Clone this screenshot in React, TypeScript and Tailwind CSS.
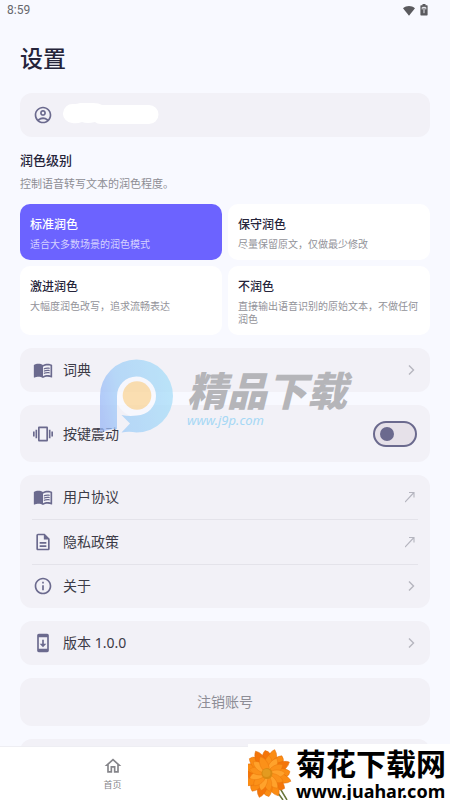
import { useState, type ReactNode } from "react"
import {
  MdInfoOutline,
  MdMenuBook,
  MdOutlineAccountCircle,
  MdOutlineDescription,
  MdOutlineHome,
  MdSystemUpdate,
  MdVibration,
} from "react-icons/md"

const levels = [
  { id: "standard", title: "标准润色", desc: "适合大多数场景的润色模式" },
  { id: "light", title: "保守润色", desc: "尽量保留原文，仅做最少修改" },
  { id: "strong", title: "激进润色", desc: "大幅度润色改写，追求流畅表达" },
  { id: "none", title: "不润色", desc: "直接输出语音识别的原始文本，不做任何润色" },
]

const outerPetals = Array.from({ length: 16 }, (_, i) => i * 22.5)
const innerPetals = Array.from({ length: 13 }, (_, i) => i * 27.7 + 9)

function Chevron() {
  return (
    <svg viewBox="0 0 12 12" className="ml-auto size-3 shrink-0" fill="none" stroke="#b5b5bf" strokeWidth="1.4" aria-hidden="true">
      <path d="M4 1.500 8.500 6 4 10.500" />
    </svg>
  )
}

function ExternalArrow() {
  return (
    <svg viewBox="0 0 12 12" className="ml-auto size-3 shrink-0" fill="none" stroke="#b5b5bf" strokeWidth="1.1" aria-hidden="true">
      <path d="M0 11 8.500 2M4 1.500h5V6.500" />
    </svg>
  )
}

function Card({ children }: { children?: ReactNode }) {
  return <div className="rounded-xl bg-[#f2f1f7]">{children}</div>
}

const row = "flex h-11 w-full items-center gap-[10px] px-[13px] text-left text-sm text-[#3c3b47]"
const icon = "size-5 shrink-0 text-[#6b6a8e]"

function StatusBar() {
  return (
    <header className="flex h-5 shrink-0 items-center justify-between pr-[22px] pl-[7px] text-xs text-[#66676c]">
      <span className="font-[Roboto,sans-serif]">8:59</span>
      <span className="flex items-center gap-[5px]">
        <svg viewBox="0 0 12 11" className="h-[11px] w-3" fill="#5a5a5e" aria-hidden="true">
          <path d="M0 3.2C3.5.2 8.5.2 12 3.2L6 10.8Z" />
        </svg>
        <svg viewBox="0 0 8 12" className="h-3 w-2" aria-hidden="true">
          <path fill="#5a5a5e" d="M2.5 0h3v1.2H7q.6 0 .6.6v9q0 .6-.6.6H1q-.6 0-.6-.6v-9q0-.6.6-.6h1.5Z" />
          <path fill="none" stroke="#f8f9ff" strokeWidth=".9" d="M4 2.8v6.4M2.2 5.4V3.4h3.6v2" />
        </svg>
      </span>
    </header>
  )
}

function Watermark() {
  return (
    <div className="pointer-events-none absolute top-[358px] left-[99px] flex" aria-hidden="true">
      <svg viewBox="0 0 76 76" className="size-[76px] opacity-75">
        <defs>
          <linearGradient id="p-ring" x1="0" y1="0.7" x2="1" y2="0.5">
            <stop offset="0" stopColor="#9bb8f6" />
            <stop offset=".3" stopColor="#a3cff8" />
            <stop offset="1" stopColor="#a8def9" />
          </linearGradient>
        </defs>
        <circle cx="38" cy="38" r="21" fill="#f8f9ff" />
        <path
          fill="url(#p-ring)"
          d="M1 74.500V38A36.500 36.500 0 1 1 37.500 74.500Q30 73 22.500 74.500L31 65.500 22.500 57Q30 58.500 38 57.500A19.500 19.500 0 1 0 18 38V71Q9 71 1 74.500Z"
        />
        <circle cx="38" cy="37.500" r="14.300" fill="#fbd597" />
      </svg>
      <div className="pt-3 pl-3 font-['Noto_Sans','Noto_Sans_CJK_SC',sans-serif] italic">
        <p className="text-[40px] leading-[42px] font-black whitespace-nowrap text-[#b5b5b9]">精品下载</p>
        <p className="text-[13px] leading-4 text-[#a6d8f5]">www.j9p.com</p>
      </div>
    </div>
  )
}

function SiteBadge() {
  return (
    <div className="absolute right-0 bottom-0 flex h-14 w-[202px] items-start bg-white text-black">
      <svg viewBox="0 0 48 56" className="h-14 w-12 shrink-0" aria-hidden="true">
        <path d="M25 42 35 56M30 41l9 15" stroke="#68753a" strokeWidth="1.500" />
        <g transform="translate(19 29.5)">
          {outerPetals.map((a, i) => (
            <path
              key={a}
              transform={`rotate(${a})`}
              d={i % 2 ? "M0 0C-7-8-7-20-2-25Q4-21 5-8Z" : "M0 0C-6-7-7-17-2-23Q6-22 5-8Z"}
              fill={i % 3 ? "#fb8c13" : "#f47509"}
              stroke="#e06c09"
              strokeWidth=".5"
            />
          ))}
          {innerPetals.map((a, i) => (
            <path
              key={a}
              transform={`rotate(${a})`}
              d="M0 0C-5-6-5-14-1-18Q5-14 4-5Z"
              fill={i % 2 ? "#ffa22b" : "#fb9119"}
              stroke="#e8750b"
              strokeWidth=".4"
            />
          ))}
          <circle r="5.500" fill="#d98a12" />
          <circle r="4" cx="-.5" cy="-.5" fill="#e39b20" />
        </g>
      </svg>
      <p className="flex flex-col pt-[2px] font-bold whitespace-nowrap">
        <span className="text-[30px] leading-9">菊花下载网</span>
        <span className="font-['Noto_Sans',sans-serif] text-lg leading-[18px]">www.juahar.com</span>
      </p>
    </div>
  )
}

export default function App() {
  const [level, setLevel] = useState("standard")
  const [vibrate, setVibrate] = useState(false)

  return (
    <div className="relative flex h-screen flex-col overflow-hidden bg-[#f8f9ff] font-['Noto_Sans','Noto_Sans_CJK_SC',sans-serif]">
      <StatusBar />

      <main className="flex min-h-0 flex-1 flex-col gap-[13px] overflow-hidden px-5">
        <h1 className="pt-5 pb-1 text-[23px] leading-9 font-medium text-[#25243a]">设置</h1>

        <Card>
          <div className={row}>
            <MdOutlineAccountCircle className={icon} />
            <svg viewBox="0 0 96 24" className="h-6 w-24" fill="#fff" aria-hidden="true">
              <path d="M10 1C16 1 18-1 24 0h6q6 0 9 2h47a9.500 9.500 0 0 1 0 19H38q-4 0-6-2-8 2-13 0-5 2-10 1A9.500 9.500 0 0 1 10 1Z" />
            </svg>
          </div>
        </Card>

        <section>
          <h2 id="level-title" className="text-[13px] leading-5 font-medium text-[#25243a]">润色级别</h2>
          <p className="mt-1 text-[11px] leading-5 text-[#8d8d94]">控制语音转写文本的润色程度。</p>
          <div role="radiogroup" aria-labelledby="level-title" className="mt-[10px] grid grid-cols-2 gap-[6px]">
            {levels.map((item) => (
              <label
                key={item.id}
                className="group cursor-pointer rounded-[10px] bg-white px-[10px] pt-3 pb-[9px] has-checked:bg-[#6c63ff]"
              >
                <input
                  type="radio"
                  name="level"
                  className="sr-only"
                  checked={level === item.id}
                  onChange={() => setLevel(item.id)}
                />
                <span className="block text-xs leading-[18px] font-medium text-[#25243a] group-has-checked:text-white">
                  {item.title}
                </span>
                <span className="mt-1 block text-[10px] leading-[13px] text-[#929299] group-has-checked:text-[#d5d2ff]">
                  {item.desc}
                </span>
              </label>
            ))}
          </div>
        </section>

        <Card>
          <button type="button" className={row}>
            <MdMenuBook className={icon} />
            词典
            <Chevron />
          </button>
        </Card>

        <Card>
          <label className="flex h-[57px] items-center gap-[10px] px-[13px] text-sm text-[#3c3b47]">
            <MdVibration className={icon} />
            按键震动
            <input
              type="checkbox"
              role="switch"
              checked={vibrate}
              onChange={(e) => setVibrate(e.target.checked)}
              className="ml-auto flex h-[26px] w-11 appearance-none items-center rounded-full border-2 border-[#6b6a8e] bg-[#e6e1e9] px-[5px] before:size-[14px] before:rounded-full before:bg-[#6b6a8e] checked:justify-end checked:bg-[#cfcbff]"
            />
          </label>
        </Card>

        <Card>
          <a href="#terms" className={row}>
            <MdMenuBook className={icon} />
            用户协议
            <ExternalArrow />
          </a>
          <div className="mx-3 h-px bg-[#e4e3ea]" />
          <a href="#privacy" className={row}>
            <MdOutlineDescription className={icon} />
            隐私政策
            <ExternalArrow />
          </a>
          <div className="mx-3 -mb-px h-px bg-[#e4e3ea]" />
          <button type="button" className={row}>
            <MdInfoOutline className={icon} />
            关于
            <Chevron />
          </button>
        </Card>

        <Card>
          <button type="button" className={row}>
            <MdSystemUpdate className={icon} />
            版本 1.0.0
            <Chevron />
          </button>
        </Card>

        <Card>
          <button type="button" className="h-12 w-full text-sm text-[#8d8d96]">注销账号</button>
        </Card>

        <Card>
          <div className="h-12" />
        </Card>
      </main>

      <nav className="grid h-[54px] shrink-0 grid-cols-2 border-t border-[#eeeef3] bg-white">
        <button type="button" className="flex flex-col items-center pt-[9px] text-[9px] leading-3 text-[#85858a]">
          <MdOutlineHome className="mb-[3px] size-5" />
          首页
        </button>
      </nav>

      <Watermark />
      <SiteBadge />
    </div>
  )
}
